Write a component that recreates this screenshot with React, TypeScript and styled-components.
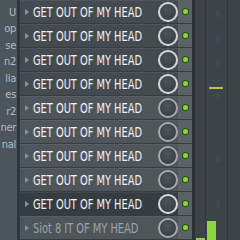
import React from 'react'
import styled, { createGlobalStyle } from 'styled-components'

const Global = createGlobalStyle`
    html, body {
        margin: 0;
        padding: 0;
        background: #3b4349;
        overflow: hidden;
    }
`

const Screen = styled.div`
    width: 240px;
    height: 240px;
    display: grid;
    grid-template-columns: 17px 3px 172px 3px 1fr;
    overflow: hidden;
    background: #3b4349;
`

const Browser = styled.div`
    background: #4c555b;
    display: flex;
    flex-direction: column;
    padding-top: 4px;
    overflow: hidden;
`

const BrowserItem = styled.div`
    height: 16.5px;
    display: flex;
    justify-content: flex-end;
    align-items: center;
    white-space: nowrap;
    font-family: "DejaVu Sans Condensed", "DejaVu Sans", sans-serif;
    font-size: 11px;
    letter-spacing: -0.3px;
    color: #b4bcc1;
    padding-right: 1px;
`

const Divider = styled.div<{ $tone: string }>`
    background: ${p => p.$tone};
`

const Rack = styled.div`
    display: flex;
    flex-direction: column;
    background: #5a6268;
`

const Row = styled.div`
    height: 24px;
    display: flex;
    align-items: stretch;
    border-bottom: 1px solid #363d42;
    box-sizing: border-box;
`

const NameBox = styled.div<{ $bg: string }>`
    width: 158px;
    display: flex;
    align-items: center;
    background: ${p => p.$bg};
    box-shadow: inset 0 1px 0 rgba(255, 255, 255, 0.06);
`

const Arrow = styled.span`
    width: 0;
    height: 0;
    margin: 0 4px 0 5px;
    border-top: 3px solid transparent;
    border-bottom: 3px solid transparent;
    border-left: 4px solid #8c959b;
`

const LabelSlot = styled.div`
    flex: 1;
    overflow: hidden;
    white-space: nowrap;
`

const Label = styled.span<{ $dim: boolean }>`
    display: inline-block;
    transform: scaleX(0.78);
    transform-origin: left center;
    font-family: "DejaVu Sans Condensed", "DejaVu Sans", sans-serif;
    font-size: 14px;
    color: ${p => (p.$dim ? '#9ba3a8' : '#eef2f4')};
`

const Knob = styled.div<{ $ring: string }>`
    width: 16px;
    height: 16px;
    border-radius: 50%;
    border: 2px solid ${p => p.$ring};
    background: radial-gradient(circle at 45% 40%, #4e565c 0%, #3a4147 70%, #32393e 100%);
    flex-shrink: 0;
`

const LedCell = styled.div`
    flex: 1;
    display: flex;
    align-items: center;
    justify-content: center;
    background: #5a6268;
`

const Led = styled.div`
    width: 5px;
    height: 5px;
    border-radius: 50%;
    background: #86dc2a;
    box-shadow: 0 0 0 1px #2f4a1a;
`

const Mixer = styled.div`
    display: grid;
    grid-template-columns: 10px 1px 21px 1px 1fr;
    background: #3c444a;
`

const Track = styled.div`
    position: relative;
    background: #3c444a;
`

const Line = styled.div`
    background: #30373c;
`

const Marker = styled.div`
    position: absolute;
    left: 3px;
    top: 87px;
    width: 14px;
    height: 2px;
    background: #b9c53a;
`

const Tick = styled.div<{ $top: number }>`
    position: absolute;
    left: 10px;
    top: ${p => p.$top}px;
    font-family: "DejaVu Sans Condensed", sans-serif;
    font-size: 8px;
    color: #4a535a;
`

const Meter = styled.div<{ $left: number; $h: number }>`
    position: absolute;
    bottom: 0;
    left: ${p => p.$left}px;
    width: 9px;
    height: ${p => p.$h}px;
    background: #8fd43c;
`

const browserItems = ['U', 'op', 'se', 'n2', 'lia', 'es', 'r2', 'ner', 'nal']

type Channel = { name: string; bg: string; ring: string; dim?: boolean }

const channels: Channel[] = [
    ...Array(4).fill(0).map(() => ({ name: 'GET OUT OF MY HEAD', bg: '#434b51', ring: '#d6dadc' })),
    ...Array(4).fill(0).map(() => ({ name: 'GET OUT OF MY HEAD', bg: '#4e565c', ring: '#a3aaae' })),
    { name: 'GET OUT OF MY HEAD', bg: '#363d42', ring: '#d9dddf' },
    { name: 'Siot 8 IT OF MY HEAD', bg: '#4e565c', ring: '#a3aaae', dim: true },
]

const App: React.FC = () => (
    <>
        <Global />
        <Screen>
            <Browser>
                {browserItems.map(b => (
                    <BrowserItem key={b}>{b}</BrowserItem>
                ))}
            </Browser>
            <Divider $tone="#30373c" />
            <Rack>
                {channels.map((c, i) => (
                    <Row key={i}>
                        <NameBox $bg={c.bg}>
                            <Arrow />
                            <LabelSlot>
                                <Label $dim={!!c.dim}>{c.name}</Label>
                            </LabelSlot>
                            <Knob $ring={c.ring} />
                        </NameBox>
                        <LedCell>
                            <Led />
                        </LedCell>
                    </Row>
                ))}
            </Rack>
            <Divider $tone="#2c3236" />
            <Mixer>
                <Track>
                    <Meter $left={1} $h={2} />
                </Track>
                <Line />
                <Track>
                    <Marker />
                    <Tick $top={10}>6</Tick>
                    <Tick $top={36}>0</Tick>
                    <Tick $top={60}>0</Tick>
                    <Tick $top={92}>6</Tick>
                    <Tick $top={155}>0</Tick>
                    <Tick $top={200}>0</Tick>
                    <Meter $left={1} $h={19} />
                </Track>
                <Line />
                <Track />
            </Mixer>
        </Screen>
    </>
)

export default App
